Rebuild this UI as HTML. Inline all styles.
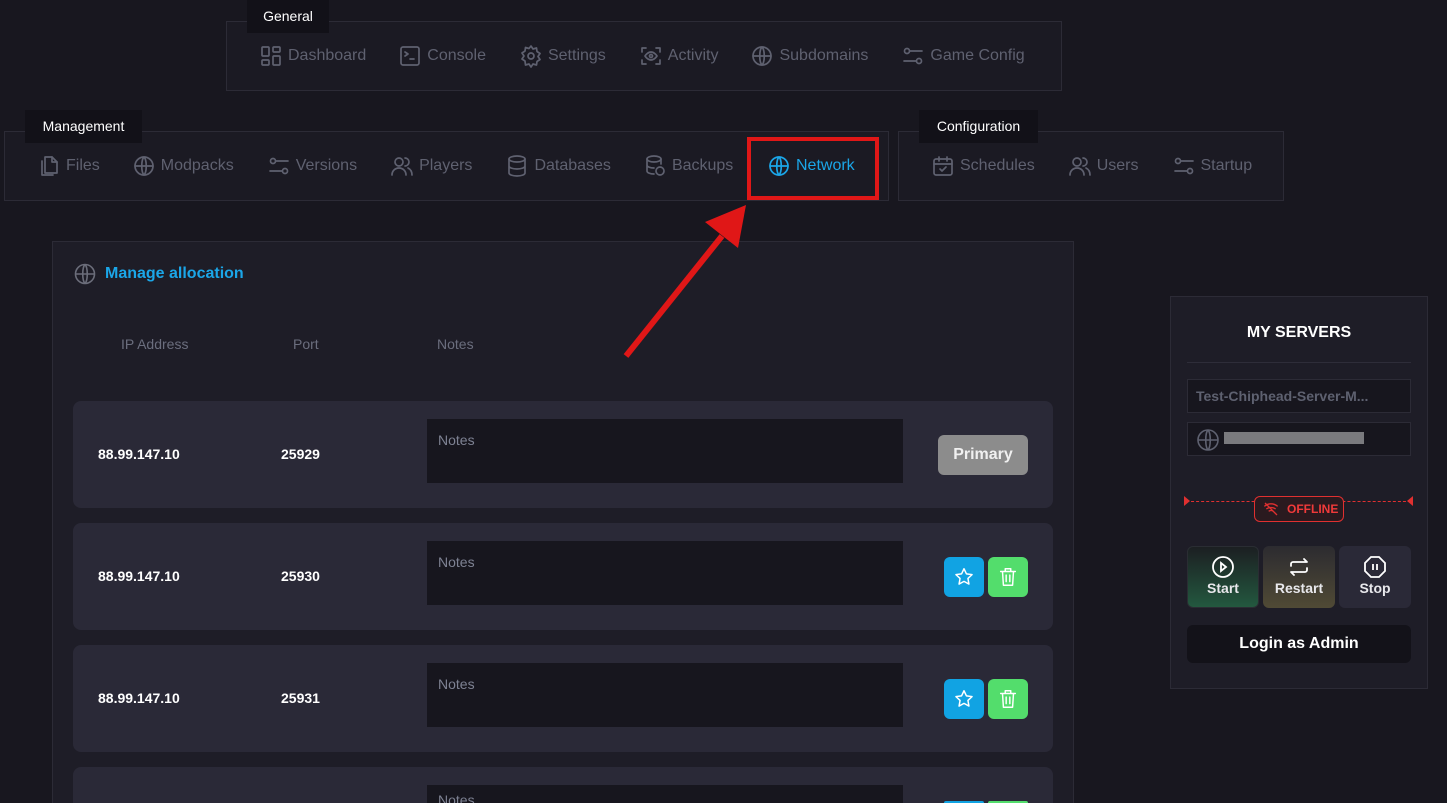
<!DOCTYPE html>
<html style="width:1447px;height:803px;overflow:hidden"><head><meta charset="utf-8"><style>
*{box-sizing:border-box;margin:0;padding:0}
body{width:1447px;height:803px;background:#18171f;font-family:"Liberation Sans",sans-serif;position:relative;overflow:hidden;color:#e8e8ec}
.box{position:absolute;border:1px solid #2c2b36;background:#1b1a23}
.tab{position:absolute;background:#121118;color:#fff;font-size:14px;text-align:center;line-height:32px;height:33px}
.nav{position:absolute;display:flex;align-items:center;color:#5f6170;font-size:16px;height:24px}
.nav span{display:flex;align-items:center;gap:5px}
.nav svg{width:24px;height:24px;fill:none;stroke:#5f6170;stroke-width:1.7;stroke-linecap:round;stroke-linejoin:round}
.row{position:absolute;left:73px;width:980px;height:107px;background:#2a2937;border-radius:8px}
.row .ip{position:absolute;left:25px;top:45px;font-weight:bold;font-size:14px;color:#fff}
.row .port{position:absolute;left:208px;top:45px;font-weight:bold;font-size:14px;color:#fff}
.row .notes{position:absolute;left:354px;top:18px;width:476px;height:64px;background:#17161e;color:#7e8293;font-size:14px;padding:13px 11px}
.btn{position:absolute;width:40px;height:40px;border-radius:6px;display:flex;align-items:center;justify-content:center}
.btn svg{width:22px;height:22px;fill:none;stroke:#fff;stroke-width:1.6;stroke-linejoin:round;stroke-linecap:round}
</style></head><body>

<div class="box" style="left:226px;top:21px;width:836px;height:70px"></div>
<div class="tab" style="left:247px;top:0;width:82px">General</div>
<div class="nav" style="left:259px;top:44px">
<span><svg viewBox="0 0 24 24"><rect x="3" y="3" width="7" height="9" rx="1"/><rect x="14" y="3" width="7" height="5" rx="1"/><rect x="14" y="12" width="7" height="9" rx="1"/><rect x="3" y="16" width="7" height="5" rx="1"/></svg>Dashboard</span>
<span style="margin-left:32px"><svg viewBox="0 0 24 24"><rect x="3" y="3" width="18" height="18" rx="2"/><path d="M7 8l3 2-3 2M12 15h4"/></svg>Console</span>
<span style="margin-left:33px"><svg viewBox="0 0 24 24"><circle cx="12" cy="12" r="3"/><path d="M12 2l2 3 3.5-1 .5 3.5 3 2-2 3 2 3-3 2-.5 3.5-3.5-1-2 3-2-3-3.5 1L6 17l-3-2 2-3-2-3 3-2 .5-3.5 3.5 1z"/></svg>Settings</span>
<span style="margin-left:33px"><svg viewBox="0 0 24 24"><path d="M3 8V4h4M17 4h4v4M21 16v4h-4M7 20H3v-4"/><path d="M6 12s2.5-4 6-4 6 4 6 4-2.5 4-6 4-6-4-6-4z"/><circle cx="12" cy="12" r="1.5"/></svg>Activity</span>
<span style="margin-left:32px"><svg viewBox="0 0 24 24"><circle cx="12" cy="12" r="9"/><path d="M3 12h18M12 3c3 3 3 15 0 18M12 3c-3 3-3 15 0 18"/></svg>Subdomains</span>
<span style="margin-left:33px"><svg viewBox="0 0 24 24"><circle cx="6" cy="7" r="2.5"/><path d="M9 7h12M3 17h12"/><circle cx="18" cy="17" r="2.5"/></svg>Game Config</span>
</div>

<div class="box" style="left:4px;top:131px;width:885px;height:70px"></div>
<div class="tab" style="left:25px;top:110px;width:117px">Management</div>
<div class="nav" style="left:37px;top:154px">
<span><svg viewBox="0 0 24 24"><path d="M8 3h7l5 5v11H8z"/><path d="M15 3v5h5M5 7v14h11"/></svg>Files</span>
<span style="margin-left:32px"><svg viewBox="0 0 24 24"><circle cx="12" cy="12" r="9"/><path d="M3 12h18M12 3c3 3 3 15 0 18M12 3c-3 3-3 15 0 18"/></svg>Modpacks</span>
<span style="margin-left:33px"><svg viewBox="0 0 24 24"><circle cx="6" cy="7" r="2.5"/><path d="M9 7h12M3 17h12"/><circle cx="18" cy="17" r="2.5"/></svg>Versions</span>
<span style="margin-left:33px"><svg viewBox="0 0 24 24"><circle cx="9" cy="8" r="4"/><path d="M2 21c0-4 3-7 7-7s7 3 7 7M15 4a4 4 0 010 8M18 14c2 1 4 3 4 7"/></svg>Players</span>
<span style="margin-left:33px"><svg viewBox="0 0 24 24"><ellipse cx="12" cy="5" rx="8" ry="3"/><path d="M4 5v14c0 1.7 3.6 3 8 3s8-1.3 8-3V5M4 12c0 1.7 3.6 3 8 3s8-1.3 8-3"/></svg>Databases</span>
<span style="margin-left:32px"><svg viewBox="0 0 24 24"><ellipse cx="11" cy="5" rx="7" ry="3"/><path d="M4 5v12c0 1.7 3 3 7 3M18 5v5M4 11c0 1.7 3 3 7 3"/><circle cx="17" cy="17" r="4"/></svg>Backups</span>
</div>
<div class="nav" style="left:767px;top:154px;color:#1ba6e8"><span><svg viewBox="0 0 24 24" style="stroke:#1ba6e8"><circle cx="12" cy="12" r="9"/><path d="M3 12h18M12 3c3 3 3 15 0 18M12 3c-3 3-3 15 0 18"/></svg>Network</span></div>
<div style="position:absolute;left:747px;top:137px;width:132px;height:63px;border:4px solid #e01717"></div>

<div class="box" style="left:898px;top:131px;width:386px;height:70px"></div>
<div class="tab" style="left:919px;top:110px;width:119px">Configuration</div>
<div class="nav" style="left:931px;top:154px">
<span><svg viewBox="0 0 24 24"><rect x="3" y="5" width="18" height="16" rx="2"/><path d="M3 10h18M8 3v4M16 3v4M9 15l2 2 4-4"/></svg>Schedules</span>
<span style="margin-left:33px"><svg viewBox="0 0 24 24"><circle cx="9" cy="8" r="4"/><path d="M2 21c0-4 3-7 7-7s7 3 7 7M15 4a4 4 0 010 8M18 14c2 1 4 3 4 7"/></svg>Users</span>
<span style="margin-left:33px"><svg viewBox="0 0 24 24"><circle cx="6" cy="7" r="2.5"/><path d="M9 7h12M3 17h12"/><circle cx="18" cy="17" r="2.5"/></svg>Startup</span>
</div>

<div class="box" style="left:52px;top:241px;width:1022px;height:562px;background:#1e1d27;border-bottom:none"></div>
<svg style="position:absolute;left:73px;top:262px" width="24" height="24" viewBox="0 0 24 24" fill="none" stroke="#6b6d7a" stroke-width="1.6"><circle cx="12" cy="12" r="9.5"/><path d="M2.5 12h19M12 2.5c3 3 3 16 0 19M12 2.5c-3 3-3 16 0 19"/></svg>
<div style="position:absolute;left:105px;top:265px;color:#1ba6e8;font-weight:bold;font-size:16px">Manage allocation</div>
<div style="position:absolute;top:336px;left:121px;color:#6b6e7e;font-size:14px">IP Address</div>
<div style="position:absolute;top:336px;left:293px;color:#6b6e7e;font-size:14px">Port</div>
<div style="position:absolute;top:336px;left:437px;color:#6b6e7e;font-size:14px">Notes</div>

<div class="row" style="top:401px"><div class="ip">88.99.147.10</div><div class="port">25929</div><div class="notes">Notes</div>
<div style="position:absolute;left:865px;top:34px;width:90px;height:40px;background:#8c8c8c;border-radius:6px;color:#f0f0f0;font-weight:bold;font-size:16px;text-align:center;line-height:40px">Primary</div></div>
<div class="row" style="top:523px"><div class="ip">88.99.147.10</div><div class="port">25930</div><div class="notes">Notes</div>
<div class="btn" style="left:871px;top:34px;background:#11a3e3"><svg viewBox="0 0 24 24"><path d="M12 3l2.7 5.6 6.1.8-4.5 4.2 1.1 6.1L12 16.8 6.6 19.7l1.1-6.1L3.2 9.4l6.1-.8z"/></svg></div>
<div class="btn" style="left:915px;top:34px;background:#53dd6c"><svg viewBox="0 0 24 24"><path d="M4 6h16M9 6V3h6v3M6 6l1 15h10l1-15M10 10v7M14 10v7"/></svg></div></div>
<div class="row" style="top:645px"><div class="ip">88.99.147.10</div><div class="port">25931</div><div class="notes">Notes</div>
<div class="btn" style="left:871px;top:34px;background:#11a3e3"><svg viewBox="0 0 24 24"><path d="M12 3l2.7 5.6 6.1.8-4.5 4.2 1.1 6.1L12 16.8 6.6 19.7l1.1-6.1L3.2 9.4l6.1-.8z"/></svg></div>
<div class="btn" style="left:915px;top:34px;background:#53dd6c"><svg viewBox="0 0 24 24"><path d="M4 6h16M9 6V3h6v3M6 6l1 15h10l1-15M10 10v7M14 10v7"/></svg></div></div>
<div class="row" style="top:767px;height:36px;border-radius:8px 8px 0 0;overflow:hidden">
<div class="notes" style="height:18px;overflow:hidden;line-height:5px;padding-top:13px">Notes</div>
<div style="position:absolute;left:871px;top:34px;width:40px;height:2px;border-radius:6px 6px 0 0;background:#11a3e3"></div>
<div style="position:absolute;left:915px;top:34px;width:40px;height:2px;border-radius:6px 6px 0 0;background:#53dd6c"></div></div>

<svg style="position:absolute;left:0;top:0" width="1447" height="803"><line x1="626" y1="356" x2="722" y2="236" stroke="#e01717" stroke-width="6"/><polygon points="746,205 738,248 705,222" fill="#e01717"/></svg>

<div class="box" style="left:1170px;top:296px;width:258px;height:393px;background:#1e1d27"></div>
<div style="position:absolute;left:1170px;top:324px;width:258px;text-align:center;font-weight:bold;font-size:16px;color:#fff">MY SERVERS</div>
<div style="position:absolute;left:1187px;top:362px;width:224px;height:1px;background:#2e2d39"></div>
<div style="position:absolute;left:1187px;top:379px;width:224px;height:34px;border:1px solid #2c2b36;background:#17161e;color:#5e6170;font-weight:bold;font-size:14px;padding:8px 8px">Test-Chiphead-Server-M...</div>
<div style="position:absolute;left:1187px;top:422px;width:224px;height:34px;border:1px solid #2c2b36;background:#17161e"></div>
<svg style="position:absolute;left:1196px;top:428px" width="24" height="24" viewBox="0 0 24 24" fill="none" stroke="#5e6170" stroke-width="1.6"><circle cx="12" cy="12" r="10"/><path d="M2 12h20M12 2c3 3 3 17 0 20M12 2c-3 3-3 17 0 20"/></svg>
<div style="position:absolute;left:1224px;top:432px;width:140px;height:12px;background:#7a7a7e"></div>
<div style="position:absolute;left:1186px;top:501px;width:225px;border-top:1px dashed #e03030"></div>
<div style="position:absolute;left:1184px;top:496px;width:0;height:0;border-top:5px solid transparent;border-bottom:5px solid transparent;border-left:6px solid #e03030"></div>
<div style="position:absolute;left:1407px;top:496px;width:0;height:0;border-top:5px solid transparent;border-bottom:5px solid transparent;border-right:6px solid #e03030"></div>
<div style="position:absolute;left:1254px;top:496px;width:90px;height:26px;border:1px solid #e03030;border-radius:6px;background:#2a1a1f;color:#f03a3a;font-weight:bold;font-size:12px;line-height:24px;padding-left:32px">OFFLINE</div>
<svg style="position:absolute;left:1263px;top:501px" width="16" height="16" viewBox="0 0 24 24" fill="none" stroke="#e03030" stroke-width="2"><path d="M2 8c6-5 14-5 20 0M5 12c4-3 10-3 14 0M8.5 15.5c2-1.5 5-1.5 7 0M3 3l18 18"/></svg>
<div style="position:absolute;left:1187px;top:546px;width:72px;height:62px;border-radius:6px;background:linear-gradient(#1c1f22,#23583f);border:1px solid #2a2d33"></div>
<div style="position:absolute;left:1263px;top:546px;width:72px;height:62px;border-radius:6px;background:linear-gradient(#2c2b30,#504a35)"></div>
<div style="position:absolute;left:1339px;top:546px;width:72px;height:62px;border-radius:6px;background:#2a2937"></div>
<svg style="position:absolute;left:1211px;top:555px" width="24" height="24" viewBox="0 0 24 24" fill="none" stroke="#fff" stroke-width="1.8"><circle cx="12" cy="12" r="10"/><path d="M10 8l5 4-5 4z"/></svg>
<svg style="position:absolute;left:1287px;top:555px" width="24" height="24" viewBox="0 0 24 24" fill="none" stroke="#fff" stroke-width="1.8" stroke-linecap="round" stroke-linejoin="round"><path d="M4 11V9a2 2 0 012-2h14l-3-3M20 13v2a2 2 0 01-2 2H4l3 3"/></svg>
<svg style="position:absolute;left:1363px;top:555px" width="24" height="24" viewBox="0 0 24 24" fill="none" stroke="#fff" stroke-width="1.8"><path d="M8 2h8l6 6v8l-6 6H8l-6-6V8z"/><path d="M10 9v6M14 9v6"/></svg>
<div style="position:absolute;left:1187px;top:580px;width:72px;text-align:center;font-weight:bold;font-size:14px">Start</div>
<div style="position:absolute;left:1263px;top:580px;width:72px;text-align:center;font-weight:bold;font-size:14px">Restart</div>
<div style="position:absolute;left:1339px;top:580px;width:72px;text-align:center;font-weight:bold;font-size:14px">Stop</div>
<div style="position:absolute;left:1187px;top:625px;width:224px;height:38px;border-radius:6px;background:#131219;text-align:center;line-height:38px;font-weight:bold;font-size:16px;color:#fff">Login as Admin</div>
</body></html>
